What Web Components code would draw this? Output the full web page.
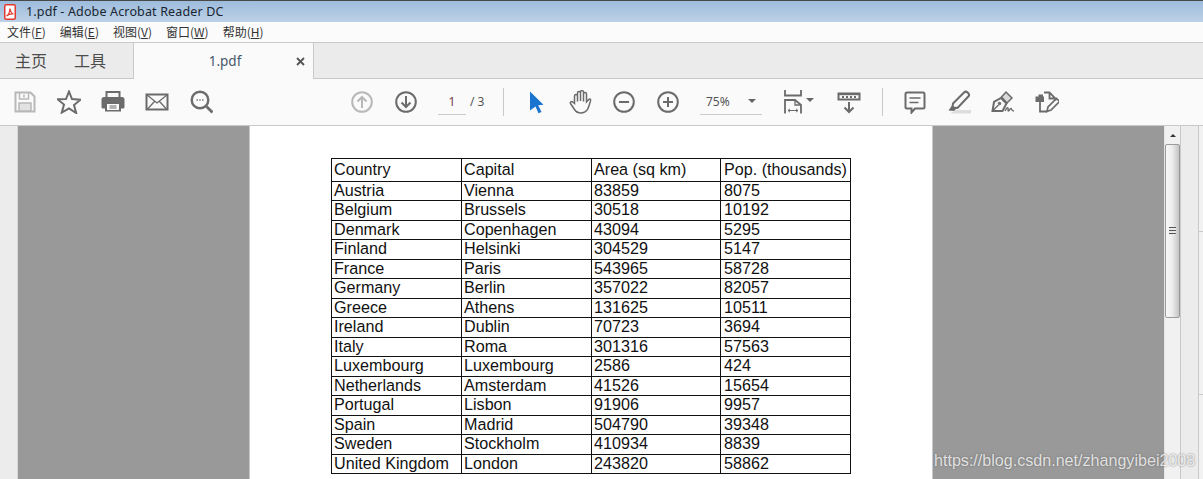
<!DOCTYPE html>
<html lang="zh">
<head>
<meta charset="utf-8">
<title>1.pdf - Adobe Acrobat Reader DC</title>
<style>
  html, body { margin: 0; height: 479px; overflow: hidden; background: #fafafa; }
  body { font-family: "Noto Sans", "Noto Sans CJK SC", sans-serif; display: flex; flex-direction: column; }
</style>
</head>
<body>
  <title-bar>1.pdf - Adobe Acrobat Reader DC</title-bar>
  <menu-bar>
    <menu-item label="文件" key="F"></menu-item>
    <menu-item label="编辑" key="E"></menu-item>
    <menu-item label="视图" key="V"></menu-item>
    <menu-item label="窗口" key="W"></menu-item>
    <menu-item label="帮助" key="H"></menu-item>
  </menu-bar>
  <tab-bar></tab-bar>
  <tool-bar></tool-bar>
  <doc-view>
    <pdf-table></pdf-table>
  </doc-view>

<script>
const ICONS = {
  save: `<path d="M2.500 2.500h15l4 4v15h-19z" fill="none"/><path d="M6.500 3v6h9V3M11 4.500v3" fill="none" stroke-width="1.500"/><path d="M6 21v-8h12v8z" fill="#e2e2e2" stroke-width="1.500"/>`,
  star: `<path d="M12 1.500l3 7.500 8.500.7-6.500 5.300 2.200 8L12 18.300 4.800 22.500l2.200-8-6.500-5.300L9 9z" fill="none"/>`,
  print: `<path d="M5.500 8V2h13v6" fill="none"/><path d="M3 7h18a2.500 2.500 0 0 1 2.500 2.500V17a1.500 1.500 0 0 1-1.500 1.500h-2v3H4v-3H2A1.500 1.500 0 0 1 .5 17V9.500A2.500 2.500 0 0 1 3 7z" stroke="none"/><path d="M6 14h12v6H6z" fill="#fafafa" stroke="none"/><path d="M8.500 16h7M8.500 18h7" stroke-width="1.200"/>`,
  mail: `<path d="M1.500 4.500h21v15h-21z" fill="none"/><path d="M2 5l10 8 10-8M2.500 19l7-7.500M21.500 19l-7-7.500" fill="none" stroke-width="1.300"/>`,
  search: `<g transform="translate(1 0)"><circle cx="10" cy="10" r="8.300" fill="none" stroke-width="2.400"/><path d="M16.500 16.500l6 6" fill="none" stroke-width="2.800"/><path d="M6.500 10h1.400M9.300 10h1.400M12.100 10h1.400" stroke-width="1.600"/></g>`,
  up: `<circle cx="12" cy="12" r="9.800" fill="none"/><path d="M12 18V7M7.500 11.500L12 7l4.500 4.500" fill="none"/>`,
  down: `<circle cx="12" cy="12" r="9.800" fill="none"/><path d="M12 6v11M7.500 12.500L12 17l4.500-4.500" fill="none"/>`,
  cursor: `<path d="M6 1.500l13.500 13.300-5.300.5 3.300 6.600-3 1.400-3-6.700L6 20.500z" stroke="none"/>`,
  hand: `<path d="M6.500 14V6.500a1.500 1.500 0 0 1 3 0V12V3.500a1.500 1.500 0 0 1 3 0V11.500V2.500a1.500 1.500 0 0 1 3 0V12V4.500a1.500 1.500 0 0 1 3 0v8c1-1 2-3 3.200-3 .9 0 1.100 1 .8 2-1 3-2 7-3.500 9.200-1.200 1.700-3 2.800-6 2.800-3.500 0-5-1.200-6.500-3.500l-4-6c-.8-1.300 1.200-2.800 2.200-1.500z" fill="none" stroke-width="1.500" transform="translate(0 -.5)"/>`,
  minus: `<circle cx="12" cy="12" r="9.800" fill="none"/><path d="M7 12h10" fill="none"/>`,
  plus: `<circle cx="12" cy="12" r="9.800" fill="none"/><path d="M7 12h10M12 7v10" fill="none"/>`,
  fit: `<path d="M4 0v5.500h16V0" fill="none" stroke-width="1.800"/><path d="M4 23.500V10h10l6 5v8.500" fill="none" stroke-width="1.800"/><path d="M14 10v5h6" fill="none" stroke-width="1.300"/><path d="M7 20.500h10M9 18.800l-2 1.700 2 1.700M15 18.800l2 1.700-2 1.700" fill="none" stroke-width="1"/>`,
  scroll: `<path d="M1.500 3.500h21v6h-21z" fill="#fafafa" stroke-width="2"/><path d="M1.500 3h21v2.200h-21z" stroke="none"/><path d="M5 6h2v2H5zM9 6h2v2H9zM13 6h2v2h-2zM17 6h2v2h-2z" stroke="none"/><path d="M12 12v10M7.500 17.500L12 22l4.500-4.500" fill="none" stroke-width="2"/>`,
  comment: `<path d="M4 2.500h16a1.500 1.500 0 0 1 1.500 1.500v13a1.500 1.500 0 0 1-1.500 1.500h-8L8.500 22.500v-4H4A1.500 1.500 0 0 1 2.500 17V4A1.500 1.500 0 0 1 4 2.500z" fill="none"/><path d="M6.500 8h11M6.500 12.500h9" fill="none" stroke-width="1.600"/>`,
  highlight: `<path d="M3 23.500h21v-3.500H9z" fill="#dddddd" stroke="none"/><path d="M6 13.500L17 2.500c1-1 2.500-1 3.500 0l.8.800c.9.900.9 2.300 0 3.200L10.500 18l-5-.5z" fill="none"/><path d="M5 15.500l-3.500 5 5.500.5 2.500-2.500z" stroke="none"/>`,
  sign: `<path d="M1.500 21l1.500-9 7-4 5.500 5.500-4 7.500z" fill="none"/><path d="M1.500 21l6-6" fill="none" stroke-width="1.400"/><circle cx="8.500" cy="13.500" r="1.300" stroke-width="1"/><path d="M10.500 7l4.500-5 6 6-5 5z" fill="#d8d8d8" stroke-width="1.500"/><path d="M14 21c1.500-3 2.500-4 3-3s-.5 3 .5 3 1.500-3 2.500-2.500 0 2.500 3 2.500" fill="none" stroke-width="1.400"/>`,
  edit: `<path d="M9 2.500h5.500l6 6v2M14.500 3v5.500h6M5 12v9.500h7" fill="none" stroke-width="1.800"/><path d="M.5 6.500h3V4.500h4.500v2h1V12H.5z" stroke="none"/><path d="M12 21.500l1-4.500 8.500-8.500 3 3-8.500 8.500z" fill="none" stroke-width="1.700"/>`
};

class TitleBar extends HTMLElement {
  connectedCallback() {
    this.attachShadow({ mode: 'open' });
    this.shadowRoot.innerHTML = `
      <style>
        :host {
          display: flex;
          align-items: center;
          flex: none;
          height: 21px;
          padding-left: 4px;
          gap: 10px;
          border-top: 1px solid #4a4a4a;
          background: linear-gradient(#9dbcdc, #bcd1e7);
          font: 12.500px "Noto Sans", sans-serif;
          letter-spacing: 0.15px;
          color: #1a2530;
        }
        svg { flex: none; }
      </style>
      <svg width="12" height="16" viewBox="0 0 12 16">
        <rect x=".75" y=".75" width="10.500" height="14.500" rx="1.500" fill="#fff" stroke="#e2382e" stroke-width="1.500"/>
        <path d="M2.500 12c2-1 3.200-3.500 3.500-7.500.4 3 1.800 5 3.500 5.500-2.500-.3-5 .3-7 2z" fill="none" stroke="#e2382e" stroke-width="1.200"/>
      </svg>
      <slot></slot>
    `;
  }
}

class MenuBar extends HTMLElement {
  connectedCallback() {
    this.attachShadow({ mode: 'open' });
    this.shadowRoot.innerHTML = `
      <style>
        :host {
          display: flex;
          align-items: center;
          flex: none;
          box-sizing: border-box;
          height: 20px;
          padding: 0 0 2px 7px;
          gap: 14px;
          background: #fbfbfb;
        }
      </style>
      <slot></slot>
    `;
  }
}

class MenuItem extends HTMLElement {
  connectedCallback() {
    this.attachShadow({ mode: 'open' });
    this.shadowRoot.innerHTML = `
      <style>
        :host {
          display: block;
          font: 12px "Noto Sans CJK SC", "Noto Sans", sans-serif;
          color: #333;
        }
      </style>
      ${this.getAttribute('label')}(<u>${this.getAttribute('key')}</u>)
    `;
  }
}

class TabBar extends HTMLElement {
  connectedCallback() {
    this.attachShadow({ mode: 'open' });
    this.shadowRoot.innerHTML = `
      <style>
        :host {
          display: flex;
          flex: none;
          height: 35px;
          background: #ebebeb;
          border-top: 1px solid #c9c9c9;
          border-bottom: 1px solid #c9c9c9;
          font-family: "Noto Sans CJK SC", "Noto Sans", sans-serif;
          color: #4d4d4d;
        }
        .nav {
          display: flex;
          align-items: center;
          gap: 27px;
          width: 118px;
          padding: 0 0 1px 15px;
          box-sizing: content-box;
          height: 34px;
          font-size: 16px;
        }
        .doc {
          position: relative;
          display: flex;
          align-items: center;
          justify-content: center;
          box-sizing: border-box;
          width: 181px;
          height: 36px;
          padding: 0 0 1px 3px;
          background: #fafafa;
          border-left: 1px solid #c9c9c9;
          border-right: 1px solid #c9c9c9;
          font: 13.500px "Noto Sans", sans-serif;
          color: #46586a;
        }
        .close {
          position: absolute;
          right: 8px;
          top: 14px;
        }
      </style>
      <div class="nav"><span>主页</span><span>工具</span></div>
      <div class="doc">
        1.pdf
        <svg class="close" width="9" height="9" viewBox="0 0 9 9"><path d="M1 1l7 7M8 1L1 8" stroke="#555" stroke-width="1.800"/></svg>
      </div>
    `;
  }
}

class ToolIcon extends HTMLElement {
  connectedCallback() {
    const color = this.getAttribute('color') || '#6b6b6b';
    this.attachShadow({ mode: 'open' });
    this.shadowRoot.innerHTML = `
      <style>
        :host {
          display: flex;
          align-items: center;
          justify-content: center;
          flex: none;
          width: 44px;
          height: 44px;
        }
      </style>
      <svg width="24" height="24" viewBox="0 0 24 24" fill="${color}" stroke="${color}" stroke-width="2">
        ${ICONS[this.getAttribute('name')]}
      </svg>
    `;
  }
}

class ToolBar extends HTMLElement {
  connectedCallback() {
    this.attachShadow({ mode: 'open' });
    this.shadowRoot.innerHTML = `
      <style>
        :host {
          display: flex;
          align-items: center;
          flex: none;
          box-sizing: border-box;
          height: 47px;
          padding: 0 0 1px 3px;
          background: #fafafa;
          border-bottom: 1px solid #c9c9c9;
          font: 12px "Noto Sans", sans-serif;
          color: #555;
        }
        .sep {
          flex: none;
          width: 1px;
          height: 28px;
          background: #c9c9c9;
        }
        .page {
          display: flex;
          align-items: center;
          flex: none;
          margin-left: 10px;
          width: 45px;
          white-space: nowrap;
        }
        .page b {
          font-weight: 400;
          box-sizing: border-box;
          flex: none;
          width: 28px;
          height: 27px;
          line-height: 27px;
          text-align: center;
          color: #7c3b4c;
          border-bottom: 1px solid #ccc;
          margin-right: 4px;
        }
        .zoom {
          display: flex;
          align-items: center;
          justify-content: space-between;
          box-sizing: border-box;
          flex: none;
          width: 62px;
          height: 27px;
          margin-left: 10px;
          padding: 0 6px;
          border-bottom: 1px solid #ccc;
        }
        .caret { width: 0; height: 0; border: 4px solid transparent; border-top: 4px solid #666; border-bottom: 0; }
        .fit { margin-left: 9px; }
        .fit-caret { margin-left: -9px; margin-bottom: 3px; flex: none; }
      </style>
      <tool-icon name="save" color="#b8b8b8"></tool-icon>
      <tool-icon name="star"></tool-icon>
      <tool-icon name="print"></tool-icon>
      <tool-icon name="mail"></tool-icon>
      <tool-icon name="search"></tool-icon>
      <tool-icon name="up" color="#b8b8b8" style="margin-left:117px"></tool-icon>
      <tool-icon name="down"></tool-icon>
      <div class="page"><b>1</b><span>/ 3</span></div>
      <div class="sep" style="margin-left:20px"></div>
      <tool-icon name="cursor" color="#1b74cf" style="margin-left:10px"></tool-icon>
      <tool-icon name="hand"></tool-icon>
      <tool-icon name="minus"></tool-icon>
      <tool-icon name="plus"></tool-icon>
      <div class="zoom"><span>75%</span><i class="caret"></i></div>
      <tool-icon name="fit" class="fit"></tool-icon>
      <i class="caret fit-caret"></i>
      <tool-icon name="scroll" style="margin-left:13px"></tool-icon>
      <div class="sep" style="margin-left:11px"></div>
      <tool-icon name="comment" style="margin-left:10px"></tool-icon>
      <tool-icon name="highlight"></tool-icon>
      <tool-icon name="sign"></tool-icon>
      <tool-icon name="edit"></tool-icon>
    `;
  }
}

class DocView extends HTMLElement {
  connectedCallback() {
    this.attachShadow({ mode: 'open' });
    this.shadowRoot.innerHTML = `
      <style>
        :host {
          position: relative;
          display: flex;
          flex: 1;
          min-height: 0;
          overflow: hidden;
          background: #ececec;
        }
        .gutter {
          flex: none;
          box-sizing: border-box;
          width: 18px;
          border-right: 1px solid #d8d8d8;
        }
        .stage {
          flex: 1;
          display: flex;
          justify-content: center;
          background: #999999;
        }
        .page {
          box-sizing: border-box;
          width: 684px;
          padding: 32px 0 0 81px;
          background: #fff;
          border-left: 1px solid #c8c8c8;
          border-right: 1px solid #c8c8c8;
        }
        .side {
          flex: none;
          box-sizing: border-box;
          width: 18px;
          border-right: 1px solid #c9c9c9;
        }
        .edge {
          flex: none;
          width: 4px;
          background: linear-gradient(#f2f2f2 105px, #c9c9c9 105px 106px, #f2f2f2 106px 268px, #c9c9c9 268px 269px, #f2f2f2 269px);
        }
        .mark {
          position: absolute;
          left: 934px;
          bottom: 8px;
          font: 16.100px "Liberation Sans", Arial, sans-serif;
          line-height: 22px;
          color: rgba(255, 255, 255, 0.78);
          text-shadow: 0 0 2px rgba(90, 90, 90, 0.8);
          white-space: nowrap;
        }
      </style>
      <div class="gutter"></div>
      <div class="stage"><div class="page"><slot></slot></div></div>
      <scroll-bar></scroll-bar>
      <div class="side"></div>
      <div class="edge"></div>
      <div class="mark">https://blog.csdn.net/zhangyibei2008</div>
    `;
  }
}

class ScrollBar extends HTMLElement {
  connectedCallback() {
    this.attachShadow({ mode: 'open' });
    this.shadowRoot.innerHTML = `
      <style>
        :host {
          display: flex;
          flex-direction: column;
          align-items: center;
          flex: none;
          box-sizing: border-box;
          width: 17px;
          background: #f1f1f1;
          border-left: 1px solid #e4e4e4;
          border-right: 1px solid #c9c9c9;
        }
        .arrow {
          flex: none;
          height: 18px;
          display: flex;
          align-items: center;
          justify-content: center;
        }
        .arrow i { width: 0; height: 0; border: 3.500px solid transparent; border-bottom: 3.500px solid #333; border-top: 0; }
        .thumb {
          flex: none;
          box-sizing: border-box;
          width: 15px;
          height: 174px;
          display: flex;
          align-items: center;
          justify-content: center;
          border: 1px solid #9a9a9a;
          border-radius: 2px;
          background: linear-gradient(90deg, #f8f8f8, #eeeeee 45%, #c4c4c4);
        }
        .grip {
          width: 7px;
          height: 8px;
          background: repeating-linear-gradient(#555 0 1px, #e8e8e8 1px 3px);
        }
      </style>
      <div class="arrow"><i></i></div>
      <div class="thumb"><div class="grip"></div></div>
    `;
  }
}

const COUNTRIES = [
  ['Austria', 'Vienna', '83859', '8075'],
  ['Belgium', 'Brussels', '30518', '10192'],
  ['Denmark', 'Copenhagen', '43094', '5295'],
  ['Finland', 'Helsinki', '304529', '5147'],
  ['France', 'Paris', '543965', '58728'],
  ['Germany', 'Berlin', '357022', '82057'],
  ['Greece', 'Athens', '131625', '10511'],
  ['Ireland', 'Dublin', '70723', '3694'],
  ['Italy', 'Roma', '301316', '57563'],
  ['Luxembourg', 'Luxembourg', '2586', '424'],
  ['Netherlands', 'Amsterdam', '41526', '15654'],
  ['Portugal', 'Lisbon', '91906', '9957'],
  ['Spain', 'Madrid', '504790', '39348'],
  ['Sweden', 'Stockholm', '410934', '8839'],
  ['United Kingdom', 'London', '243820', '58862']
];

class PdfTable extends HTMLElement {
  connectedCallback() {
    // row pitch in the reference is 19.5px, so heights alternate
    const rows = COUNTRIES.map((r, i) => `
      <tr style="height:${i % 2 ? 20 : 19}px">${r.map(c => `<td>${c}</td>`).join('')}</tr>`).join('');
    this.attachShadow({ mode: 'open' });
    this.shadowRoot.innerHTML = `
      <style>
        :host { display: block; }
        table {
          table-layout: fixed;
          width: 520px;
          border-collapse: collapse;
          font: 16.150px "Liberation Sans", Arial, sans-serif;
          color: #111;
        }
        td {
          padding: 0 0 2px 2px;
          border: 1px solid #111;
          line-height: 16px;
          white-space: nowrap;
          overflow: hidden;
          vertical-align: top;
        }
        td:last-child { padding-left: 3px; }
        tr:first-child td { vertical-align: middle; }
      </style>
      <table>
        <colgroup><col style="width:130px"><col style="width:130px"><col style="width:129px"><col style="width:130px"></colgroup>
        <tr style="height:23px"><td>Country</td><td>Capital</td><td>Area (sq km)</td><td>Pop. (thousands)</td></tr>
        ${rows}
      </table>
    `;
  }
}

customElements.define('title-bar', TitleBar);
customElements.define('menu-bar', MenuBar);
customElements.define('menu-item', MenuItem);
customElements.define('tab-bar', TabBar);
customElements.define('tool-icon', ToolIcon);
customElements.define('tool-bar', ToolBar);
customElements.define('scroll-bar', ScrollBar);
customElements.define('doc-view', DocView);
customElements.define('pdf-table', PdfTable);
</script>
</body>
</html>
